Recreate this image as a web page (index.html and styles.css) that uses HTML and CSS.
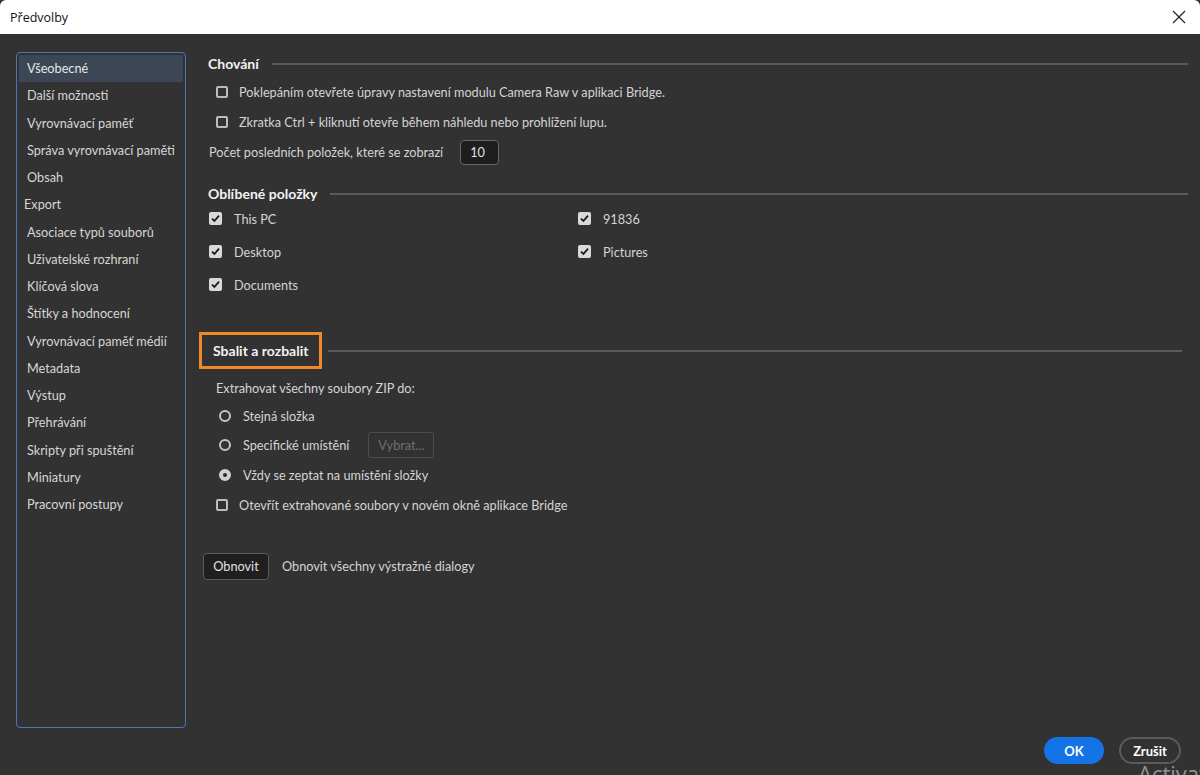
FILE: index.html
```html
<!DOCTYPE html>
<html lang="cs">
<head>
<meta charset="utf-8">
<title>Předvolby</title>
<link rel="stylesheet" href="styles.css">
</head>
<body>
<div class="window">
  <div class="titlebar">
    <span class="title">Předvolby</span>
    <svg class="close" width="14" height="14" viewBox="0 0 14 14"><path d="M1 1L13 13M13 1L1 13" stroke="#222" stroke-width="1.2" fill="none"/></svg>
  </div>
  <div class="main">
    <ul class="sidebar">
      <li class="item selected">Všeobecné</li>
      <li class="item">Další možnosti</li>
      <li class="item">Vyrovnávací paměť</li>
      <li class="item">Správa vyrovnávací paměti</li>
      <li class="item">Obsah</li>
      <li class="item export">Export</li>
      <li class="item">Asociace typů souborů</li>
      <li class="item">Uživatelské rozhraní</li>
      <li class="item">Klíčová slova</li>
      <li class="item">Štítky a hodnocení</li>
      <li class="item">Vyrovnávací paměť médií</li>
      <li class="item">Metadata</li>
      <li class="item">Výstup</li>
      <li class="item">Přehrávání</li>
      <li class="item">Skripty při spuštění</li>
      <li class="item">Miniatury</li>
      <li class="item">Pracovní postupy</li>
    </ul>
    <div class="content">
      <div class="section-head head-behavior">
        <span class="head-text">Chování</span>
        <span class="head-line"></span>
      </div>
      <div class="row indent13"><span class="cb"></span><span>Poklepáním otevřete úpravy nastavení modulu Camera Raw v aplikaci Bridge.</span></div>
      <div class="row indent13"><span class="cb"></span><span>Zkratka Ctrl + kliknutí otevře během náhledu nebo prohlížení lupu.</span></div>
      <div class="row indent6">
        <span>Počet posledních položek, které se zobrazí</span>
        <span class="num-input">10</span>
      </div>

      <div class="section-head head-fav">
        <span class="head-text">Oblíbené položky</span>
        <span class="head-line"></span>
      </div>
      <div class="fav-grid">
        <div class="frow"><span class="cb checked"><svg width="13" height="13" viewBox="0 0 13 13"><path d="M3 6.6L5.4 9L10 3.6" stroke="#1a1a1a" stroke-width="1.8" fill="none"/></svg></span><span>This PC</span></div>
        <div class="frow"><span class="cb checked"><svg width="13" height="13" viewBox="0 0 13 13"><path d="M3 6.6L5.4 9L10 3.6" stroke="#1a1a1a" stroke-width="1.8" fill="none"/></svg></span><span>91836</span></div>
        <div class="frow"><span class="cb checked"><svg width="13" height="13" viewBox="0 0 13 13"><path d="M3 6.6L5.4 9L10 3.6" stroke="#1a1a1a" stroke-width="1.8" fill="none"/></svg></span><span>Desktop</span></div>
        <div class="frow"><span class="cb checked"><svg width="13" height="13" viewBox="0 0 13 13"><path d="M3 6.6L5.4 9L10 3.6" stroke="#1a1a1a" stroke-width="1.8" fill="none"/></svg></span><span>Pictures</span></div>
        <div class="frow"><span class="cb checked"><svg width="13" height="13" viewBox="0 0 13 13"><path d="M3 6.6L5.4 9L10 3.6" stroke="#1a1a1a" stroke-width="1.8" fill="none"/></svg></span><span>Documents</span></div>
      </div>

      <div class="section-head head-zip">
        <span class="head-box">Sbalit a rozbalit</span>
        <span class="head-line short"></span>
      </div>
      <div class="row-s indent13">Extrahovat všechny soubory ZIP do:</div>
      <div class="rrow"><span class="radio"></span><span>Stejná složka</span></div>
      <div class="rrow"><span class="radio"></span><span>Specifické umístění</span><span class="btn-disabled">Vybrat...</span></div>
      <div class="rrow"><span class="radio on"></span><span>Vždy se zeptat na umístění složky</span></div>
      <div class="row indent13"><span class="cb"></span><span>Otevřít extrahované soubory v novém okně aplikace Bridge</span></div>

      <div class="reset-row">
        <span class="btn-dark">Obnovit</span>
        <span>Obnovit všechny výstražné dialogy</span>
      </div>
    </div>
  </div>
  <div class="footer">
    <span class="btn-ok">OK</span>
    <span class="btn-cancel">Zrušit</span>
  </div>
  <div class="watermark">Activate Windows</div>
</div>
</body>
</html>
```

FILE: styles.css
```css
* { box-sizing: border-box; }
html, body { margin: 0; padding: 0; }
body {
  width: 1200px;
  height: 775px;
  overflow: hidden;
  background: #323232;
  font-family: "Lato", "Open Sans", sans-serif;
  font-size: 12.7px;
  color: #d4d4d4;
}
.window {
  position: relative;
  width: 1200px;
  height: 775px;
  display: flex;
  flex-direction: column;
  overflow: hidden;
}
.titlebar {
  height: 34px;
  flex: none;
  background: #ffffff;
  display: flex;
  align-items: center;
  justify-content: space-between;
  padding: 0 14px 0 10px;
  border-top-left-radius: 6px;
  border-top-right-radius: 6px;
}
.title {
  font-family: "Open Sans", "Noto Sans", sans-serif;
  font-size: 12.5px;
  color: #111;
}
.close { display: block; margin-top: 0; }
.main {
  display: flex;
  padding-top: 18px;
  height: 694px;
  flex: none;
}
.sidebar {
  list-style: none;
  margin: 0 0 0 16px;
  padding: 2px 1px;
  width: 170px;
  height: 676px;
  border: 1px solid #4a78b4;
  border-radius: 4px;
  flex: none;
}
.item {
  height: 27.25px;
  line-height: 27px;
  padding-left: 8px;
  margin: 0 1px;
  white-space: nowrap;
  color: #d6d6d6;
}
.item.selected { background: #3c4654; color: #e6e6e6; }
.item.export { padding-left: 5px; }

.content {
  flex: 1;
  margin-left: 17px;
  margin-right: 12px;
  display: flex;
  flex-direction: column;
}
.section-head {
  display: flex;
  align-items: center;
}
.head-text {
  font-weight: 700;
  font-size: 14px;
  color: #f2f2f2;
  padding-left: 5px;
  line-height: 18px;
}
.head-line {
  flex: 1;
  height: 2px;
  background: #5a5a5a;
  margin-left: 13px;
}
.head-line.short { margin-left: 6px; margin-right: 6px; }
.head-behavior { height: 18px; margin-top: 3px; }
.head-fav { height: 18px; margin-top: 18px; }
.head-zip { height: 37px; margin-top: 31px; margin-left: -4px; }
.head-box {
  border: 3px solid #f0892a;
  padding: 0 11px 0 11px;
  height: 37px;
  line-height: 31px;
  font-weight: 700;
  font-size: 14px;
  color: #f2f2f2;
}

.row {
  height: 30px;
  display: flex;
  align-items: center;
  white-space: nowrap;
}
.head-behavior + .row { margin-top: 4px; }
.indent13 { padding-left: 13px; }
.indent6 { padding-left: 6px; }
.row .cb { margin-right: 11px; }
.cb {
  width: 12px;
  height: 12px;
  border: 2px solid #bdbdbd;
  border-radius: 2px;
  flex: none;
  display: inline-flex;
}
.cb.checked {
  width: 13px;
  height: 13px;
  border: none;
  background: #d9d9d9;
}
.num-input {
  margin-left: 17px;
  width: 39px;
  height: 25px;
  line-height: 23px;
  padding-left: 9px;
  background: #1e1e1e;
  border: 1px solid #676767;
  border-radius: 4px;
  color: #e0e0e0;
}
.fav-grid {
  display: grid;
  grid-template-columns: 369px 1fr;
  grid-auto-rows: 33px;
  padding-left: 6px;
  margin-top: -1px;
}
.frow {
  display: flex;
  align-items: center;
  gap: 12px;
}
.row-s {
  height: 26px;
  line-height: 26px;
  margin-top: 6px;
}
.rrow {
  height: 29.5px;
  display: flex;
  align-items: center;
  padding-left: 16px;
  white-space: nowrap;
}
.radio {
  width: 12px;
  height: 12px;
  border: 2px solid #c4c4c4;
  border-radius: 50%;
  margin-right: 12px;
  flex: none;
}
.radio.on {
  background: #d0d0d0;
  border-color: #d0d0d0;
  position: relative;
}
.radio.on::after {
  content: "";
  position: absolute;
  left: 2px;
  top: 2px;
  width: 4px;
  height: 4px;
  border-radius: 50%;
  background: #2a2a2a;
}
.btn-disabled {
  margin-left: 19px;
  width: 66px;
  height: 26px;
  line-height: 24px;
  text-align: center;
  border: 1px solid #4c4c4c;
  border-radius: 3px;
  color: #6f6f6f;
}
.reset-row {
  margin-top: 33px;
  height: 27px;
  display: flex;
  align-items: center;
  gap: 13px;
}
.btn-dark {
  width: 66px;
  height: 27px;
  line-height: 25px;
  text-align: center;
  background: #1f1f1f;
  border: 1px solid #5a5a5a;
  border-radius: 4px;
  color: #e0e0e0;
}
.footer {
  display: flex;
  justify-content: flex-end;
  gap: 15px;
  padding-right: 19px;
  margin-top: 9px;
}
.btn-ok, .btn-cancel {
  height: 27px;
  border-radius: 14px;
  font-weight: 700;
  font-size: 13px;
  color: #ffffff;
  display: flex;
  align-items: center;
  justify-content: center;
}
.btn-ok {
  width: 60px;
  background: #1473e6;
}
.btn-cancel {
  width: 62px;
  border: 2px solid #5c5c5c;
}
.watermark {
  position: absolute;
  left: 1138px;
  top: 758px;
  font-family: "Open Sans", sans-serif;
  font-size: 22px;
  color: rgba(230,230,230,0.55);
  white-space: nowrap;
}
```
